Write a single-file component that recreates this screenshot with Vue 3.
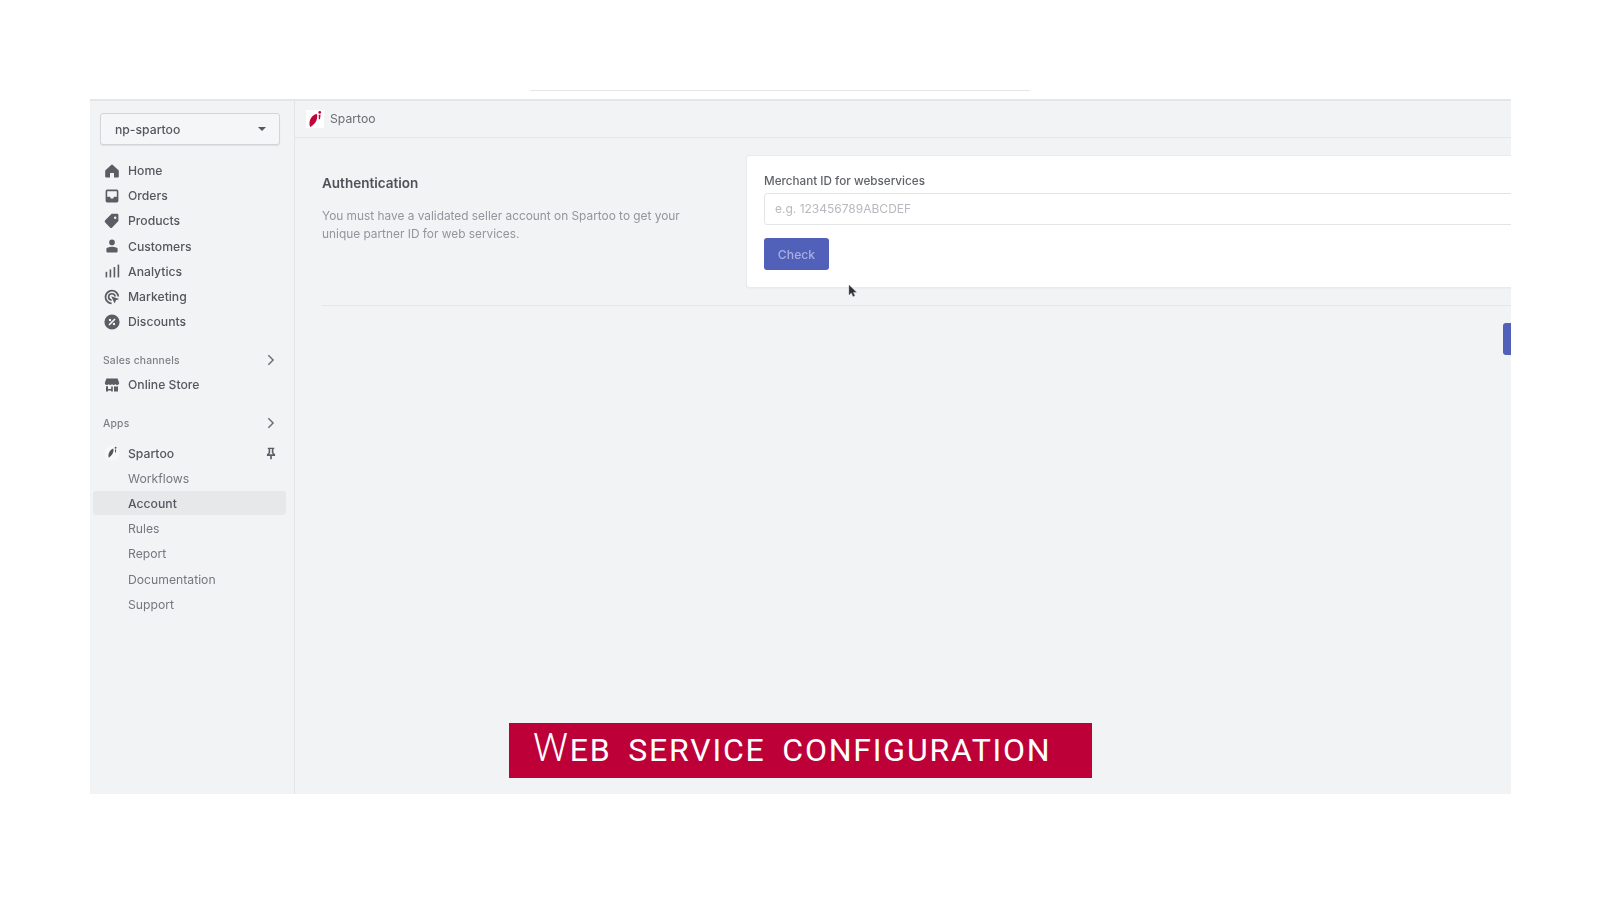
<template>
  <div class="page">
    <div class="top-line"></div>
    <div class="frame">
      <aside class="sidebar">
        <div class="store-select">
          <span>np-spartoo</span>
          <i class="caret"></i>
        </div>

        <nav class="nav main-nav">
          <a v-for="item in mainItems" :key="item.label" class="row">
            <svg class="icon" viewBox="0 0 20 20" v-html="item.icon"></svg>
            <span>{{ item.label }}</span>
          </a>
        </nav>

        <div class="group-title first">
          <span>Sales channels</span>
          <svg class="chevron" viewBox="0 0 10 14"><path d="M2.500 1.500 8 7l-5.500 5.500" /></svg>
        </div>
        <a class="row">
          <svg class="icon" viewBox="0 0 20 20">
            <path d="M3 2h14l2 5.500c0 1.600-1.300 2.500-2.500 2.500-1 0-1.900-.5-2.200-1.300-.5.800-1.400 1.300-2.300 1.300s-1.500-.4-2-1.200c-.5.800-1.100 1.200-2 1.200s-1.800-.5-2.300-1.300C5.400 9.500 4.500 10 3.500 10 2.300 10 1 9.100 1 7.500L3 2zM2.500 11.500c1 .3 2 .2 2.500 0V15h4v-3.200c.6.200 1.400.2 2 0V18H9v-1H5v1H2.500v-6.500zM12.500 11.500c1 .3 3 .4 5 0V18h-5v-6.500z" />
          </svg>
          <span>Online Store</span>
        </a>

        <div class="group-title second">
          <span>Apps</span>
          <svg class="chevron" viewBox="0 0 10 14"><path d="M2.500 1.500 8 7l-5.500 5.500" /></svg>
        </div>

        <a class="row app-row">
          <svg class="icon" viewBox="0 0 20 20">
            <circle cx="10" cy="10" r="9.500" fill="#f8f8f9" />
            <path d="M11.500 4.500c1.500 3.500-1.500 9-5.500 11.500-1.500-3.500.5-9.500 5.500-11.500z" fill="#53565c" />
            <circle cx="14.500" cy="3.500" r="1.200" fill="#53565c" />
            <path d="M13.700 5.500h1.600l-.5 4h-1z" fill="#53565c" />
          </svg>
          <span>Spartoo</span>
          <svg class="pin" viewBox="0 0 12 16">
            <path d="M2 1h8v1.500H9V7l2 2v2H7v4H5v-4H1V9l2-2V2.500H2V1zm3 1.500v5L3.500 9h5L7 7.500v-5H5z" />
          </svg>
        </a>
        <nav class="nav sub-nav">
          <a
            v-for="item in subItems"
            :key="item"
            class="sub-row"
            :class="{ active: item === 'Account' }"
          >{{ item }}</a>
        </nav>
      </aside>

      <main class="content">
        <header class="app-bar">
          <span class="logo">
            <svg viewBox="0 0 17 17">
              <path d="M10 3.500c2 3.800-1 10-6 12.500-2-4 0-10.500 6-12.500z" fill="#c1043a" />
              <circle cx="13" cy="2.300" r="1.300" fill="#c1043a" />
              <path d="M12 4.500h1.800l-.6 4.300h-1.100z" fill="#c1043a" />
            </svg>
          </span>
          <span>Spartoo</span>
        </header>

        <div class="body">
          <section class="layout">
            <div class="intro">
              <h2>Authentication</h2>
              <p>You must have a validated seller account on Spartoo to get your unique partner ID for web services.</p>
            </div>
            <div class="card">
              <label>Merchant ID for webservices</label>
              <div class="field">e.g. 123456789ABCDEF</div>
              <button class="check">Check</button>
            </div>
          </section>
          <div class="divider"></div>
          <div class="actions"><button class="save"></button></div>
        </div>
      </main>

      <svg class="cursor" viewBox="0 0 10 14">
        <path d="M1 1v10l2.400-2.200L5 12.500l1.800-.8L5.200 8.200H8.500L1 1z" fill="#2f3136" stroke="#8a8c90" stroke-width=".4" />
      </svg>
    </div>

    <div class="banner">
      <span class="cap">W</span><span>EB SERVICE CONFIGURATION</span>
    </div>
  </div>
</template>

<script setup>
const mainItems = [
  { label: 'Home', icon: '<path d="M18.500 9.500 10.700 2.300a1 1 0 0 0-1.400 0L1.500 9.500V17a1 1 0 0 0 1 1h5v-5.500h5V18h5a1 1 0 0 0 1-1V9.500z"/>' },
  { label: 'Orders', icon: '<path fill-rule="evenodd" d="M4 2h12a2 2 0 0 1 2 2v12a2 2 0 0 1-2 2H4a2 2 0 0 1-2-2V4a2 2 0 0 1 2-2zm0 2v7h3.500l1 2h3l1-2H16V4H4z"/>' },
  { label: 'Products', icon: '<path d="M18 2.500A1.500 1.500 0 0 0 16.500 1h-7L1.500 9a2 2 0 0 0 0 2.800l6 6.200a2 2 0 0 0 2.800 0l7.700-8V2.500zM14 7.500a1.500 1.500 0 1 1 0-3 1.500 1.500 0 0 1 0 3z"/>' },
  { label: 'Customers', icon: '<circle cx="10" cy="5.500" r="3.500"/><path d="M3 13.500c0-1.200 3-2.500 7-2.500s7 1.300 7 2.500V17a1 1 0 0 1-1 1H4a1 1 0 0 1-1-1v-3.500z"/>' },
  { label: 'Analytics', icon: '<rect x="2" y="11" width="2" height="7"/><rect x="7" y="8" width="2" height="10"/><rect x="12" y="5" width="2" height="13"/><rect x="17" y="2" width="2" height="16"/>' },
  { label: 'Marketing', icon: '<path fill-rule="evenodd" d="M10 1a9 9 0 0 1 9 8.500h-2.200A6.900 6.900 0 1 0 9.500 16.900V19A9 9 0 0 1 10 1zm0 4a5 5 0 0 1 5 4.500h-2.200A3 3 0 1 0 9.500 12.900V15A5 5 0 0 1 10 5z"/><path d="M9 9l10 3.500-4 1.700-1.700 4L9 9z"/>' },
  { label: 'Discounts', icon: '<path fill-rule="evenodd" d="M10 .5a9.500 9.500 0 1 1 0 19 9.500 9.500 0 0 1 0-19zM7.500 6a1.500 1.500 0 1 0 0 3 1.500 1.500 0 0 0 0-3zm5 5a1.500 1.500 0 1 0 0 3 1.500 1.500 0 0 0 0-3zM13 5.500 5.500 13l1.500 1.500L14.500 7 13 5.500z"/>' },
];

const subItems = ['Workflows', 'Account', 'Rules', 'Report', 'Documentation', 'Support'];
</script>

<style>
html,
body {
  margin: 0;
  background: #fff;
}
</style>

<style scoped>
.page {
  position: relative;
  width: 1600px;
  height: 900px;
  overflow: hidden;
  background: #fff;
  font-family: Inter, "Liberation Sans", sans-serif;
  color: #54575d;
}

.top-line {
  width: 500px;
  height: 1px;
  margin-left: 530px;
  padding-top: 90px;
  background: #e6e6e8;
  background-clip: content-box;
  box-sizing: content-box;
}

.frame {
  position: relative;
  display: flex;
  width: 1421px;
  height: 695px;
  margin: 8px 0 0 90px;
  overflow: hidden;
  background: #f2f3f5;
  border-top: 2px solid #e4e5e7;
  box-sizing: border-box;
  filter: blur(0.5px);
}

.sidebar {
  flex: 0 0 205px;
  box-sizing: border-box;
  border-right: 1px solid #e3e4e6;
  padding-top: 12px;
}

.store-select {
  display: flex;
  align-items: center;
  justify-content: space-between;
  box-sizing: border-box;
  width: 180px;
  height: 32px;
  margin-left: 10px;
  padding: 0 13px 0 14px;
  background: #f5f6f7;
  border: 1px solid #d3d5d8;
  border-radius: 3px;
  box-shadow: 0 1px 1px rgba(0, 0, 0, 0.08);
  font-size: 12.200px;
  font-weight: 500;
}

.caret {
  width: 0;
  height: 0;
  border-left: 4px solid transparent;
  border-right: 4px solid transparent;
  border-top: 4px solid #55585e;
}

.main-nav {
  margin-top: 13px;
}

.row {
  display: flex;
  align-items: center;
  height: 25.200px;
  padding-left: 14px;
  font-size: 12.200px;
  font-weight: 500;
  color: #54575d;
}

.icon {
  flex: none;
  width: 16px;
  height: 16px;
  margin-right: 8px;
  fill: #5a5d63;
}

.group-title {
  display: flex;
  align-items: center;
  justify-content: space-between;
  height: 16px;
  padding: 0 19px 0 13px;
  font-size: 10.300px;
  font-weight: 500;
  letter-spacing: 0.2px;
  color: #7d8086;
}

.group-title.first {
  margin-top: 18px;
  margin-bottom: 4px;
}

.group-title.second {
  margin-top: 17px;
}

.chevron {
  width: 9px;
  height: 12px;
  fill: none;
  stroke: #6b6e74;
  stroke-width: 1.700;
}

.app-row {
  margin-top: 10px;
  position: relative;
}

.pin {
  position: absolute;
  right: 18px;
  top: 6px;
  width: 10px;
  height: 13px;
  fill: #5a5d63;
}

.sub-row {
  display: flex;
  align-items: center;
  height: 25.200px;
  margin: 0 8px 0 3px;
  padding-left: 35px;
  font-size: 12.200px;
  color: #74777d;
  border-radius: 3px;
}

.sub-row.active {
  height: 24px;
  margin-top: 0.600px;
  margin-bottom: 0.600px;
  background: #e7e8ea;
  color: #54575d;
  font-weight: 500;
}

.content {
  flex: 1;
  min-width: 0;
}

.app-bar {
  display: flex;
  align-items: center;
  gap: 6px;
  box-sizing: content-box;
  height: 35px;
  padding: 0 0 1px 11px;
  border-bottom: 1px solid #e5e6e8;
  font-size: 12.200px;
  color: #696c72;
}

.logo {
  display: block;
  width: 18px;
  height: 18px;
  background: #fff;
}

.logo svg {
  display: block;
  width: 18px;
  height: 18px;
}

.body {
  padding: 18px 0 0 27px;
}

.layout {
  display: flex;
  width: 1400px;
}

.intro {
  flex: 0 0 425px;
  padding-top: 18px;
}

.intro h2 {
  margin: 0;
  font-size: 13.500px;
  line-height: 18px;
  font-weight: 600;
  color: #4e5157;
}

.intro p {
  width: 372px;
  margin: 16px 0 0;
  font-size: 11.870px;
  line-height: 17.500px;
  color: #92959b;
}

.card {
  box-sizing: border-box;
  width: 977px;
  height: 131px;
  padding: 17px 17px;
  background: #fff;
  border-radius: 3px;
  box-shadow: 0 0 0 1px #e9eaec, 0 1px 2px rgba(0, 0, 0, 0.1);
}

.card label {
  display: block;
  font-size: 11.700px;
  line-height: 16px;
  font-weight: 500;
  color: #5f6268;
}

.field {
  box-sizing: border-box;
  height: 32px;
  margin-top: 4px;
  padding-left: 10px;
  border: 1px solid #e3e4e6;
  border-radius: 3px;
  font-size: 12px;
  line-height: 30px;
  color: #b7b9be;
}

.check {
  display: block;
  width: 65px;
  height: 32px;
  margin-top: 13px;
  padding: 0;
  border: 0;
  border-radius: 3px;
  background: #5160b8;
  font: 500 12.200px Inter, "Liberation Sans", sans-serif;
  color: #a9b0e0;
}

.divider {
  height: 1px;
  margin-top: 18px;
  background: #e5e6e8;
}

.actions {
  display: flex;
  justify-content: flex-end;
  margin-top: 17px;
  margin-right: -20px;
}

.save {
  width: 28px;
  height: 32px;
  padding: 0;
  border: 0;
  border-radius: 3px;
  background: #5160b8;
}

.cursor {
  position: absolute;
  left: 758px;
  top: 183px;
  width: 10px;
  height: 14px;
}

.banner {
  position: absolute;
  left: 509px;
  top: 723px;
  box-sizing: border-box;
  width: 583px;
  height: 55px;
  padding: 0 0 0 24px;
  background: #be0039;
  color: #fff;
  font-family: Roboto, "Liberation Sans", sans-serif;
  font-size: 32px;
  font-weight: 400;
  line-height: 50px;
  letter-spacing: 1.800px;
  word-spacing: 7px;
  white-space: nowrap;
}

.cap {
  font-size: 39px;
  font-weight: 300;
}
</style>
